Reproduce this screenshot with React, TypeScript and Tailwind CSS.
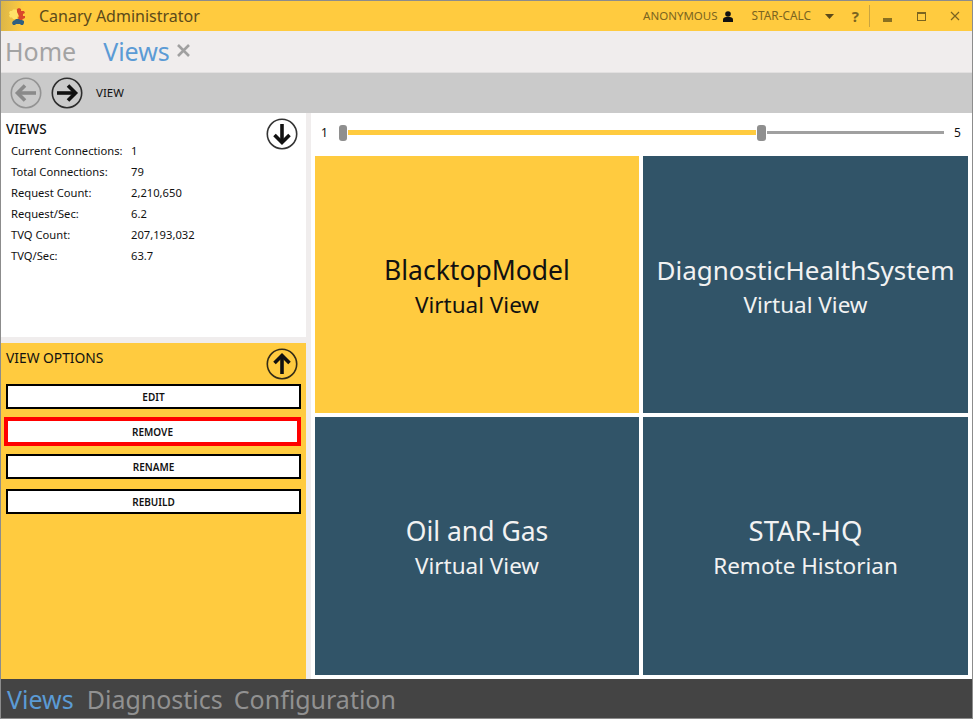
const FONT = "font-['Noto_Sans','Open_Sans',sans-serif]";

function Circle({ dir, cls, size = 32 }: { dir: "left" | "right" | "up" | "down"; cls: string; size?: number }) {
  const rot = { right: 0, down: 90, left: 180, up: 270 }[dir];
  return (
    <svg width={size} height={size} viewBox="0 0 32 32" className={cls} fill="none">
      <circle cx="16" cy="16" r="14.7" stroke="currentColor" strokeWidth="1.6" opacity="0.85" />
      <g transform={`rotate(${rot} 16 16)`} stroke="currentColor" strokeWidth="3.6">
        <path d="M6 16H23.5" />
        <path d="M17 8.5L24.5 16L17 23.5" />
      </g>
    </svg>
  );
}

function Stat({ k, v }: { k: string; v: string }) {
  return (
    <div className="flex h-[21px] items-center pl-[10px] text-[11.2px] text-[#111]">
      <span className="w-[120px]">{k}</span>
      <span>{v}</span>
    </div>
  );
}

function OptionButton({ label, red }: { label: string; red?: boolean }) {
  return red ? (
    <button className="-ml-[2px] flex h-[29px] w-[297px] items-center justify-center border-[4px] border-[#ff0000] bg-white pt-[1px] text-[10px] font-semibold text-[#111]">
      {label}
    </button>
  ) : (
    <button className="flex h-[25px] w-[295px] items-center justify-center border-[2px] border-black bg-white pt-[1px] text-[10px] font-semibold text-[#111]">
      {label}
    </button>
  );
}

function Tile({ title, sub, active, titleCls = "text-[26.5px]" }: { title: string; sub: string; active?: boolean; titleCls?: string }) {
  return (
    <div
      className={`flex flex-col items-center justify-center pt-[3px] ${
        active ? "bg-[#ffcb3f] text-[#111]" : "bg-[#315468] text-[#f2f2f2]"
      }`}
    >
      <div className={`${titleCls} leading-[36px]`}>{title}</div>
      <div className="text-[22.5px] leading-[33px]">{sub}</div>
    </div>
  );
}

export default function App() {
  return (
    <div className={`${FONT} flex h-[719px] w-[973px] flex-col overflow-hidden border border-[#8c8c8c] bg-white`}>
      {/* Title bar */}
      <div className="flex h-[30px] shrink-0 items-center bg-[linear-gradient(90deg,#dcb648_0px,#ffcb3f_22px)]">
        <svg width="20" height="20" viewBox="0 0 20 20" className="ml-[6px]">
          <path d="M3 5h2l1-1.500h3l1 1.500h1v5l-1 1v2H6l-1-1.500H3l-1-2 1-1-1-1.500z" fill="#ffe268" />
          <path d="M10 3l2-1 2 1v2h3l1 2-2 1v2h2v2l-2 1-1 1h-3l-1-2 1-2-1-2-1-2z" fill="#d9482b" />
          <path d="M6 15l2-1 1-1h3l1 1h2l2 1v2l-1 2h-2l-1-1H9l-1 1H6l-1-2z" fill="#2f5f80" />
        </svg>
        <span className="ml-[12px] text-[16px] text-[#5c4a1a]">Canary Administrator</span>
        <div className="ml-auto flex items-center text-[11.5px] text-[#7a6420]">
          <span>ANONYMOUS</span>
          <svg width="10" height="11" viewBox="0 0 10 11" className="ml-[5px]">
            <circle cx="5" cy="3" r="2.8" fill="#111" />
            <path d="M0 11V8.500C0 6.500 2 6 5 6s5 .5 5 2.500V11z" fill="#111" />
          </svg>
          <span className="ml-[19px] text-[11.8px]">STAR-CALC</span>
          <svg width="9" height="5" viewBox="0 0 9 5" className="ml-[14px]">
            <path d="M0 0h9L4.500 5z" fill="#5c4a1a" />
          </svg>
          <span className="ml-[18px] text-[15px] font-bold leading-none">?</span>
          <div className="ml-[10px] h-[22px] w-px bg-[#c9a440]" />
          <div className="ml-[13px] mt-[7px] h-[4px] w-[9px] bg-[#8a7020]" />
          <div className="ml-[25px] h-[9px] w-[9px] border border-t-[2px] border-[#7a6420]" />
          <svg width="10" height="10" viewBox="0 0 10 10" className="ml-[24px] mr-[12px]">
            <path d="M1 1l8 8M9 1l-8 8" stroke="#7a6420" strokeWidth="1.2" />
          </svg>
        </div>
      </div>

      {/* Tabs */}
      <div className="flex h-[42px] shrink-0 items-center border-b border-[#e2e0e0] bg-[#f0eded] pl-[4px] pt-[1px] text-[25px]">
        <span className="text-[#a3a3a3]">Home</span>
        <span className="ml-[27px] text-[#5b9bd5]">Views</span>
        <svg width="13" height="13" viewBox="0 0 13 13" className="ml-[7px] mb-[4px]">
          <path d="M1 1l11 11M12 1L1 12" stroke="#a0a0a0" strokeWidth="2.6" />
        </svg>
      </div>

      {/* Toolbar */}
      <div className="flex h-[40px] shrink-0 items-center bg-[#cacaca] pl-[9px]">
        <Circle dir="left" cls="text-[#8a8a8a]" />
        <Circle dir="right" cls="ml-[9px] text-[#111]" />
        <span className="ml-[13px] text-[11.5px] text-[#111]">VIEW</span>
      </div>

      {/* Main */}
      <div className="flex min-h-0 flex-1">
        <div className="flex w-[305px] shrink-0 flex-col">
          <div className="relative h-[224px] shrink-0 bg-white pl-[5px] pt-[8px]">
            <div className="h-[20px] text-[13.500px] font-medium leading-[16px] text-[#111]">VIEWS</div>
            <div className="-ml-[5px]">
              <Stat k="Current Connections:" v="1" />
              <Stat k="Total Connections:" v="79" />
              <Stat k="Request Count:" v="2,210,650" />
              <Stat k="Request/Sec:" v="6.2" />
              <Stat k="TVQ Count:" v="207,193,032" />
              <Stat k="TVQ/Sec:" v="63.7" />
            </div>
            <div className="absolute right-[8px] top-[5px]">
              <Circle dir="down" cls="text-[#111]" />
            </div>
          </div>
          <div className="h-[6px] shrink-0 bg-[#f0eded]" />
          <div className="relative flex-1 bg-[#ffcb3f] pl-[5px]">
            <div className="h-[41px] pt-[6px] text-[13.800px] leading-[18px] text-[#111]">VIEW OPTIONS</div>
            <div className="flex flex-col gap-[10px]">
              <OptionButton label="EDIT" />
              <div className="-my-[2px]">
                <OptionButton label="REMOVE" red />
              </div>
              <OptionButton label="RENAME" />
              <OptionButton label="REBUILD" />
            </div>
            <div className="absolute right-[8px] top-[5px]">
              <Circle dir="up" cls="text-[#111]" />
            </div>
          </div>
        </div>

        <div className="w-[5px] shrink-0 bg-[#f0eded]" />

        <div className="flex min-w-0 flex-1 flex-col bg-white pl-[4px] pr-[4px] pb-[4px]">
          <div className="flex h-[43px] shrink-0 items-center pb-[4px] text-[12px] text-[#111]">
            <span className="ml-[6px] w-[18px]">1</span>
            <div className="h-[16px] w-[8px] rounded-[3px] bg-[#8f8f8f]" />
            <div className="ml-[1px] h-[5px] w-[408px] bg-[#ffcb3f]" />
            <div className="ml-[1px] h-[16px] w-[9px] rounded-[3px] bg-[#8f8f8f]" />
            <div className="ml-[1px] h-[3px] w-[177px] bg-[#a0a0a0]" />
            <span className="ml-[10px]">5</span>
          </div>
          <div className="grid flex-1 grid-cols-[324px_1fr] grid-rows-[257px_1fr] gap-[4px]">
            <Tile title="BlacktopModel" sub="Virtual View" active />
            <Tile title="DiagnosticHealthSystem" sub="Virtual View" titleCls="text-[26px]" />
            <Tile title="Oil and Gas" sub="Virtual View" />
            <Tile title="STAR-HQ" sub="Remote Historian" titleCls="text-[27.5px]" />
          </div>
        </div>
      </div>

      {/* Bottom nav */}
      <div className="flex h-[39px] shrink-0 items-center bg-[#444444] pl-[6px] pt-[2px] text-[25px]">
        <span className="text-[#5b9bd5]">Views</span>
        <span className="ml-[13px] text-[#919191]">Diagnostics</span>
        <span className="ml-[11px] text-[#919191]">Configuration</span>
      </div>
    </div>
  );
}
